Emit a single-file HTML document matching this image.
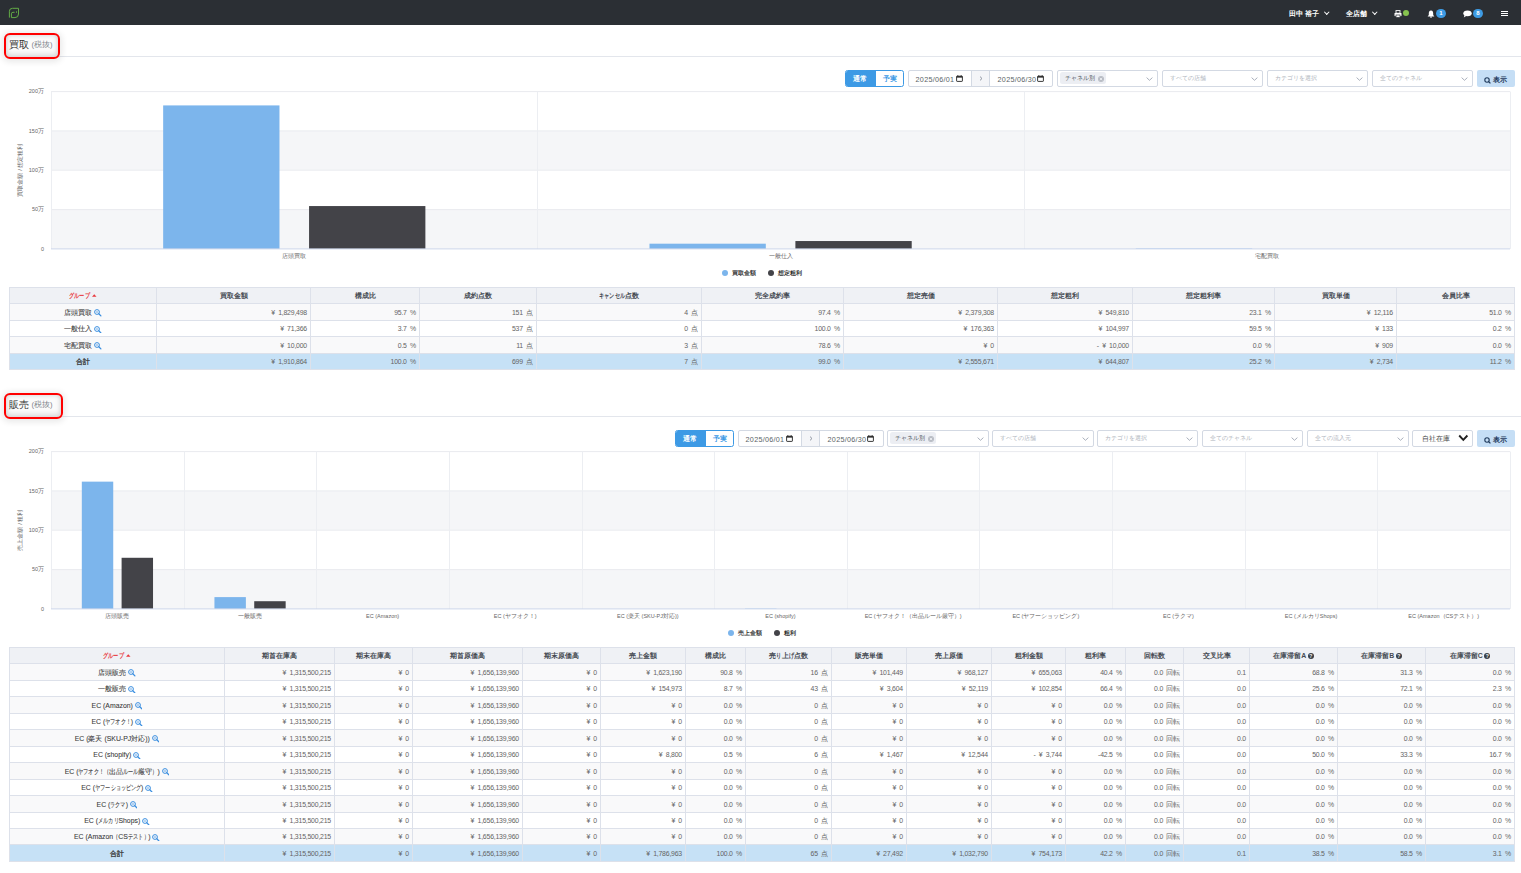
<!DOCTYPE html><html lang="ja"><head><meta charset="utf-8"><title>dashboard</title><style>
*{box-sizing:border-box;margin:0;padding:0}
html,body{width:1521px;height:873px;overflow:hidden;background:#fff}
body{position:relative;font-family:"Liberation Sans",sans-serif;color:#444}
.ab{position:absolute}
.hdr{left:0;top:0;width:1521px;height:24.5px;background:#2b2f34}
.hw{color:#fff;font-weight:bold;font-size:7px;line-height:7px;white-space:nowrap}
.ttl{font-size:10px;line-height:10px;color:#333;white-space:nowrap}
.ttl small{font-size:7px;color:#8a8f96}
.rbox{border:2.4px solid #ff0000;border-radius:6px;box-shadow:0 1px 6px 2px rgba(0,0,0,.09), inset 0 -2px 5px 1px rgba(0,0,0,.12), inset 0 1px 4px rgba(0,0,0,.07)}
.hline{height:1px;background:#e3e6ec}
.ctl{border:1px solid #d3d9e3;border-radius:2px;background:#fff}
.dtxt{font-size:7.2px;line-height:7px;color:#5a5f66;white-space:nowrap;letter-spacing:0.27px}
.ctxt{font-size:6px;line-height:6px;white-space:nowrap}
.chev{width:4px;height:4px;border-right:0.8px solid #9aa3b0;border-bottom:0.8px solid #9aa3b0;transform:rotate(45deg)}
.ylab{font-size:5.5px;line-height:6px;color:#666;text-align:right;width:40px;white-space:nowrap}
.clab{font-size:5.5px;line-height:6px;color:#666;text-align:center;white-space:nowrap}
.leg{font-size:5.8px;line-height:6px;color:#333;font-weight:bold;white-space:nowrap}
.tl{background:#dde1ea}
.cell{display:flex;align-items:center;white-space:nowrap;overflow:hidden;font-size:6.9px;line-height:7px}
.th{justify-content:center;font-weight:bold;color:#454a52;font-size:6.9px}
.tg{justify-content:center;color:#3a3a3a;-webkit-text-stroke:0.08px #3a3a3a}
.tt{-webkit-text-stroke:0.3px #3a3a3a}
.td{justify-content:flex-end;padding-right:3px;color:#646464;word-spacing:1.6px;letter-spacing:-0.2px}
.kw{display:inline-block;position:relative;height:1em;vertical-align:top}
.ki{position:absolute;left:0;top:0;transform-origin:0 50%;white-space:nowrap}
.sort{color:#e8383d}
.mag{display:inline-block;width:7.5px;height:7.5px;position:relative;top:0.9px;margin-left:2px;flex:none}
.q{display:inline-block;width:6px;height:6px;border-radius:50%;background:#3a3f47;color:#fff;font-size:5px;line-height:6px;text-align:center;margin-left:1.5px;font-weight:bold}
</style></head><body>
<div class="ab hdr"></div>
<svg class="ab" style="left:5px;top:4px" width="20" height="18" viewBox="0 0 20 18"><path d="M4.4 13.6 V7.2 Q4.4 4.3 7.5 4.3 H13.5 V10 Q13.5 13.6 10 13.6 H6.4 V9.8 Q6.4 8.3 8 8.3 H9.6" fill="none" stroke="#63aa46" stroke-width="1.0"/><ellipse cx="11.5" cy="8.1" rx="0.55" ry="0.8" fill="#65ad47"/></svg>
<div class="ab hw" style="left:1289px;top:9.5px">田中 裕子</div>
<div class="ab chev" style="left:1324.5px;top:10.2px;border-color:#fff;width:3.5px;height:3.5px"></div>
<div class="ab hw" style="left:1346px;top:9.5px">全店舗</div>
<div class="ab chev" style="left:1372.5px;top:10.2px;border-color:#fff;width:3.5px;height:3.5px"></div>
<svg class="ab" style="left:1393.5px;top:9.5px" width="8" height="8" viewBox="0 0 8 8"><rect x="2" y="0.6" width="4" height="2.6" fill="none" stroke="#fff" stroke-width="0.9"/><rect x="0.5" y="3" width="7" height="3.2" rx="0.6" fill="#fff"/><rect x="2" y="5" width="4" height="2.5" fill="#fff" stroke="#2b2f34" stroke-width="0.7"/></svg>
<div class="ab" style="left:1402.8px;top:9.9px;width:6.5px;height:6.5px;border-radius:50%;background:#86c34f"></div>
<svg class="ab" style="left:1427px;top:9.6px" width="8" height="8" viewBox="0 0 8 8"><path d="M4 0.4 C2.2 0.6 1.8 2 1.8 3.4 V5 L0.6 6.4 H7.4 L6.2 5 V3.4 C6.2 2 5.8 0.6 4 0.4Z" fill="#fff"/><circle cx="4" cy="7.1" r="0.8" fill="#fff"/></svg>
<div class="ab" style="left:1436px;top:8.8px;width:10px;height:9.4px;border-radius:50%;background:#3d9be4;color:#fff;font-size:6px;line-height:9.4px;text-align:center;font-weight:bold">1</div>
<svg class="ab" style="left:1463px;top:10px" width="9" height="8" viewBox="0 0 9 8"><ellipse cx="4.5" cy="3.3" rx="4.2" ry="2.9" fill="#fff"/><path d="M1.6 5 L0.8 7.4 L3.6 5.8Z" fill="#fff"/></svg>
<div class="ab" style="left:1473px;top:8.6px;width:10px;height:9.6px;border-radius:50%;background:#3d9be4;color:#fff;font-size:6px;line-height:9.6px;text-align:center;font-weight:bold">8</div>
<div class="ab" style="left:1500.8px;top:10.6px;width:7.2px;height:1.1px;background:#fff"></div>
<div class="ab" style="left:1500.8px;top:12.9px;width:7.2px;height:1.1px;background:#fff"></div>
<div class="ab" style="left:1500.8px;top:15.2px;width:7.2px;height:1.1px;background:#fff"></div>
<div class="ab hline" style="left:58px;top:56px;width:1463px"></div>
<div class="ab rbox" style="left:4.2px;top:33.1px;width:55.6px;height:25.6px;background:#fbfbfb"></div>
<div class="ab ttl" style="left:9.2px;top:39.6px">買取<span style="font-size:7.6px;color:#80858c;margin-left:2.3px;position:relative;top:-0.6px">(税抜)</span></div>
<div class="ab" style="left:845px;top:70px;width:59px;height:17px;border:1px solid #3d9ae5;border-radius:2.5px;background:#fff;overflow:hidden"><div style="position:absolute;left:0;top:0;width:30px;height:100%;background:#3d9ae5"></div></div>
<div class="ab" style="left:852.6px;top:75.2px;font-size:6.8px;line-height:7px;color:#fff;font-weight:bold">通常</div>
<div class="ab" style="left:882.6px;top:75.0px;font-size:6.8px;line-height:7px;color:#3d9ae5;font-weight:bold">予実</div>
<div class="ab ctl" style="left:908px;top:70px;width:145px;height:17px"></div>
<div class="ab" style="left:971px;top:71px;width:19px;height:15px;background:#f4f5f8;border-left:1px solid #d3d9e3;border-right:1px solid #d3d9e3"></div>
<svg class="ab" style="left:979.0px;top:76.2px" width="4" height="5" viewBox="0 0 4 5"><path d="M1 0.6 L3 2.5 L1 4.4" fill="none" stroke="#7a8290" stroke-width="0.8"/></svg>
<div class="ab dtxt" style="left:915.6px;top:76.0px">2025/06/01</div>
<svg class="ab" style="left:956.0px;top:74.8px" width="7" height="7" viewBox="0 0 7 7"><rect x="0.6" y="1.2" width="5.8" height="5.2" rx="0.5" fill="none" stroke="#222" stroke-width="0.9"/><rect x="0.6" y="1.2" width="5.8" height="1.4" fill="#222"/><path d="M1.8 0.2 V1.5 M5.2 0.2 V1.5" stroke="#222" stroke-width="0.8"/></svg>
<div class="ab dtxt" style="left:997.6px;top:76.0px">2025/06/30</div>
<svg class="ab" style="left:1036.8px;top:74.8px" width="7" height="7" viewBox="0 0 7 7"><rect x="0.6" y="1.2" width="5.8" height="5.2" rx="0.5" fill="none" stroke="#222" stroke-width="0.9"/><rect x="0.6" y="1.2" width="5.8" height="1.4" fill="#222"/><path d="M1.8 0.2 V1.5 M5.2 0.2 V1.5" stroke="#222" stroke-width="0.8"/></svg>
<div class="ab ctl" style="left:1057px;top:70px;width:101px;height:17px"></div>
<div class="ab" style="left:1060.0px;top:72.0px;width:46px;height:12px;background:#eceef3;border-radius:2.5px"></div>
<div class="ab ctxt" style="left:1064.9px;top:75.2px;color:#505560;font-size:5.9px">チャネル別</div>
<svg class="ab" style="left:1097.9px;top:75.9px" width="6" height="6" viewBox="0 0 6 6"><circle cx="3" cy="3" r="3" fill="#b8bcc4"/><path d="M1.8 1.8 L4.2 4.2 M4.2 1.8 L1.8 4.2" stroke="#eceef2" stroke-width="0.9"/></svg>
<svg class="ab" style="left:1145.7px;top:76.5px" width="7" height="4" viewBox="0 0 7 4"><path d="M0.6 0.6 L3.5 3.3 L6.4 0.6" fill="none" stroke="#8d96a5" stroke-width="0.75"/></svg>
<div class="ab ctl" style="left:1162px;top:70px;width:101px;height:17px"></div>
<div class="ab ctxt" style="left:1170.0px;top:75.4px;color:#adb2ba">すべての店舗</div>
<svg class="ab" style="left:1250.7px;top:76.5px" width="7" height="4" viewBox="0 0 7 4"><path d="M0.6 0.6 L3.5 3.3 L6.4 0.6" fill="none" stroke="#8d96a5" stroke-width="0.75"/></svg>
<div class="ab ctl" style="left:1267px;top:70px;width:101px;height:17px"></div>
<div class="ab ctxt" style="left:1275.0px;top:75.4px;color:#adb2ba">カテゴリを選択</div>
<svg class="ab" style="left:1355.7px;top:76.5px" width="7" height="4" viewBox="0 0 7 4"><path d="M0.6 0.6 L3.5 3.3 L6.4 0.6" fill="none" stroke="#8d96a5" stroke-width="0.75"/></svg>
<div class="ab ctl" style="left:1372px;top:70px;width:101px;height:17px"></div>
<div class="ab ctxt" style="left:1380.0px;top:75.4px;color:#adb2ba">全てのチャネル</div>
<svg class="ab" style="left:1460.7px;top:76.5px" width="7" height="4" viewBox="0 0 7 4"><path d="M0.6 0.6 L3.5 3.3 L6.4 0.6" fill="none" stroke="#8d96a5" stroke-width="0.75"/></svg>
<div class="ab" style="left:1477px;top:70px;width:38px;height:17px;background:#c5def5;border-radius:2px"></div>
<svg class="ab" style="left:1484.2px;top:76.5px" width="7" height="7" viewBox="0 0 7 7"><circle cx="3" cy="3" r="2.2" fill="none" stroke="#1f3a5c" stroke-width="1.1"/><path d="M4.6 4.6 L6.4 6.4" stroke="#1f3a5c" stroke-width="1.3"/></svg>
<div class="ab" style="left:1493.4px;top:75.9px;font-size:6.6px;line-height:7px;color:#1f3a5c;font-weight:bold">表示</div>
<svg class="ab" style="left:0;top:81px" width="1521" height="200" viewBox="0 81 1521 200"><rect x="51.0" y="130.93" width="1459.0" height="39.33" fill="#f5f6f8"/><rect x="51.0" y="209.57" width="1459.0" height="39.33" fill="#f5f6f8"/><line x1="51.0" x2="1510.0" y1="91.6" y2="91.6" stroke="#e9ebef" stroke-width="1"/><line x1="51.0" x2="1510.0" y1="130.9" y2="130.9" stroke="#e9ebef" stroke-width="1"/><line x1="51.0" x2="1510.0" y1="170.2" y2="170.2" stroke="#e9ebef" stroke-width="1"/><line x1="51.0" x2="1510.0" y1="209.6" y2="209.6" stroke="#e9ebef" stroke-width="1"/><line x1="51.5" x2="51.5" y1="91.6" y2="248.9" stroke="#eceef2" stroke-width="1"/><line x1="537.5" x2="537.5" y1="91.6" y2="248.9" stroke="#eceef2" stroke-width="1"/><line x1="1024.5" x2="1024.5" y1="91.6" y2="248.9" stroke="#eceef2" stroke-width="1"/><line x1="1510.5" x2="1510.5" y1="91.6" y2="248.9" stroke="#eceef2" stroke-width="1"/><rect x="163.16" y="105.41" width="116.32" height="143.49" fill="#7cb5ec"/><rect x="309.06" y="206.06" width="116.32" height="42.84" fill="#434348"/><rect x="649.49" y="243.69" width="116.32" height="5.21" fill="#7cb5ec"/><rect x="795.39" y="241.04" width="116.32" height="7.86" fill="#434348"/><rect x="1135.82" y="248.51" width="116.32" height="0.39" fill="#7cb5ec"/><line x1="51.0" x2="1510.0" y1="248.9" y2="248.9" stroke="#ccd6eb" stroke-width="1"/></svg>
<div class="ab ylab" style="left:4px;top:88.4px">200万</div>
<div class="ab ylab" style="left:4px;top:127.7px">150万</div>
<div class="ab ylab" style="left:4px;top:167.1px">100万</div>
<div class="ab ylab" style="left:4px;top:206.4px">50万</div>
<div class="ab ylab" style="left:4px;top:245.7px">0</div>
<div class="ab" style="left:20px;top:170.2px;width:0;height:0"><div style="position:absolute;left:-40px;top:-3px;width:80px;text-align:center;font-size:6px;line-height:6px;color:#666;transform:rotate(-90deg);white-space:nowrap">買取金額 / 想定粗利</div></div>
<div class="ab clab" style="left:224.2px;top:253.1px;width:140.0px">店頭買取</div>
<div class="ab clab" style="left:710.5px;top:253.1px;width:140.0px">一般仕入</div>
<div class="ab clab" style="left:1196.8px;top:253.1px;width:140.0px">宅配買取</div>
<div class="ab" style="left:722.1px;top:270.0px;width:6px;height:6px;border-radius:50%;background:#7cb5ec"></div>
<div class="ab leg" style="left:731.6px;top:269.9px">買取金額</div>
<div class="ab" style="left:768.2px;top:270.0px;width:6px;height:6px;border-radius:50%;background:#434348"></div>
<div class="ab leg" style="left:778.1px;top:269.9px">想定粗利</div>
<div class="ab" style="left:9px;top:287px;width:1506px;height:17px;background:#eff1f5"></div><div class="ab" style="left:9px;top:303px;width:1506px;height:18px;background:#f9f9fa"></div><div class="ab" style="left:9px;top:320px;width:1506px;height:17px;background:#ffffff"></div><div class="ab" style="left:9px;top:336px;width:1506px;height:18px;background:#f9f9fa"></div><div class="ab" style="left:9px;top:353px;width:1506px;height:17px;background:#c6e1f6"></div><div class="ab tl" style="left:9px;top:287px;width:1506px;height:1px"></div><div class="ab tl" style="left:9px;top:303px;width:1506px;height:1px"></div><div class="ab tl" style="left:9px;top:320px;width:1506px;height:1px"></div><div class="ab tl" style="left:9px;top:336px;width:1506px;height:1px"></div><div class="ab tl" style="left:9px;top:353px;width:1506px;height:1px"></div><div class="ab tl" style="left:9px;top:369px;width:1506px;height:1px"></div><div class="ab tl" style="left:9px;top:287px;width:1px;height:83px"></div><div class="ab tl" style="left:156px;top:287px;width:1px;height:83px"></div><div class="ab tl" style="left:310px;top:287px;width:1px;height:83px"></div><div class="ab tl" style="left:419px;top:287px;width:1px;height:83px"></div><div class="ab tl" style="left:536px;top:287px;width:1px;height:83px"></div><div class="ab tl" style="left:701px;top:287px;width:1px;height:83px"></div><div class="ab tl" style="left:843px;top:287px;width:1px;height:83px"></div><div class="ab tl" style="left:997px;top:287px;width:1px;height:83px"></div><div class="ab tl" style="left:1132px;top:287px;width:1px;height:83px"></div><div class="ab tl" style="left:1274px;top:287px;width:1px;height:83px"></div><div class="ab tl" style="left:1396px;top:287px;width:1px;height:83px"></div><div class="ab tl" style="left:1514px;top:287px;width:1px;height:83px"></div><div class="ab cell th" style="left:10px;top:288px;width:146px;height:15px"><span class="sort"><span class="kw" style="width:2.960em"><span class="ki" style="transform:scaleX(0.74)">グループ</span></span><svg style="display:inline-block;margin-left:3px;vertical-align:1.2px" width="4.5" height="3" viewBox="0 0 4.5 3"><path d="M0 2.8 L2.25 0.2 L4.5 2.8Z" fill="#e8383d"/></svg></span></div><div class="ab cell th" style="left:157px;top:288px;width:153px;height:15px">買取金額</div><div class="ab cell th" style="left:311px;top:288px;width:108px;height:15px">構成比</div><div class="ab cell th" style="left:420px;top:288px;width:116px;height:15px">成約点数</div><div class="ab cell th" style="left:537px;top:288px;width:164px;height:15px"><span class="kw" style="width:3.700em"><span class="ki" style="transform:scaleX(0.74)">キャンセル</span></span>点数</div><div class="ab cell th" style="left:702px;top:288px;width:141px;height:15px">完全成約率</div><div class="ab cell th" style="left:844px;top:288px;width:153px;height:15px">想定売価</div><div class="ab cell th" style="left:998px;top:288px;width:134px;height:15px">想定粗利</div><div class="ab cell th" style="left:1133px;top:288px;width:141px;height:15px">想定粗利率</div><div class="ab cell th" style="left:1275px;top:288px;width:121px;height:15px">買取単価</div><div class="ab cell th" style="left:1397px;top:288px;width:117px;height:15px">会員比率</div><div class="ab cell tg" style="left:10px;top:304px;width:146px;height:16px">店頭買取<svg class="mag" viewBox="0 0 7.5 7.5"><circle cx="3" cy="3" r="2.4" fill="none" stroke="#3b8fe0" stroke-width="1.0"/><path d="M4.8 4.8 L6.9 6.9" stroke="#3b8fe0" stroke-width="1.3" stroke-linecap="round"/><path d="M1.9 3 H4.1" stroke="#3b8fe0" stroke-width="0.75"/></svg></div><div class="ab cell td" style="left:157px;top:304px;width:153px;height:16px">¥ 1,829,498</div><div class="ab cell td" style="left:311px;top:304px;width:108px;height:16px">95.7 %</div><div class="ab cell td" style="left:420px;top:304px;width:116px;height:16px">151 点</div><div class="ab cell td" style="left:537px;top:304px;width:164px;height:16px">4 点</div><div class="ab cell td" style="left:702px;top:304px;width:141px;height:16px">97.4 %</div><div class="ab cell td" style="left:844px;top:304px;width:153px;height:16px">¥ 2,379,308</div><div class="ab cell td" style="left:998px;top:304px;width:134px;height:16px">¥ 549,810</div><div class="ab cell td" style="left:1133px;top:304px;width:141px;height:16px">23.1 %</div><div class="ab cell td" style="left:1275px;top:304px;width:121px;height:16px">¥ 12,116</div><div class="ab cell td" style="left:1397px;top:304px;width:117px;height:16px">51.0 %</div><div class="ab cell tg" style="left:10px;top:321px;width:146px;height:15px">一般仕入<svg class="mag" viewBox="0 0 7.5 7.5"><circle cx="3" cy="3" r="2.4" fill="none" stroke="#3b8fe0" stroke-width="1.0"/><path d="M4.8 4.8 L6.9 6.9" stroke="#3b8fe0" stroke-width="1.3" stroke-linecap="round"/><path d="M1.9 3 H4.1" stroke="#3b8fe0" stroke-width="0.75"/></svg></div><div class="ab cell td" style="left:157px;top:321px;width:153px;height:15px">¥ 71,366</div><div class="ab cell td" style="left:311px;top:321px;width:108px;height:15px">3.7 %</div><div class="ab cell td" style="left:420px;top:321px;width:116px;height:15px">537 点</div><div class="ab cell td" style="left:537px;top:321px;width:164px;height:15px">0 点</div><div class="ab cell td" style="left:702px;top:321px;width:141px;height:15px">100.0 %</div><div class="ab cell td" style="left:844px;top:321px;width:153px;height:15px">¥ 176,363</div><div class="ab cell td" style="left:998px;top:321px;width:134px;height:15px">¥ 104,997</div><div class="ab cell td" style="left:1133px;top:321px;width:141px;height:15px">59.5 %</div><div class="ab cell td" style="left:1275px;top:321px;width:121px;height:15px">¥ 133</div><div class="ab cell td" style="left:1397px;top:321px;width:117px;height:15px">0.2 %</div><div class="ab cell tg" style="left:10px;top:337px;width:146px;height:16px">宅配買取<svg class="mag" viewBox="0 0 7.5 7.5"><circle cx="3" cy="3" r="2.4" fill="none" stroke="#3b8fe0" stroke-width="1.0"/><path d="M4.8 4.8 L6.9 6.9" stroke="#3b8fe0" stroke-width="1.3" stroke-linecap="round"/><path d="M1.9 3 H4.1" stroke="#3b8fe0" stroke-width="0.75"/></svg></div><div class="ab cell td" style="left:157px;top:337px;width:153px;height:16px">¥ 10,000</div><div class="ab cell td" style="left:311px;top:337px;width:108px;height:16px">0.5 %</div><div class="ab cell td" style="left:420px;top:337px;width:116px;height:16px">11 点</div><div class="ab cell td" style="left:537px;top:337px;width:164px;height:16px">3 点</div><div class="ab cell td" style="left:702px;top:337px;width:141px;height:16px">78.6 %</div><div class="ab cell td" style="left:844px;top:337px;width:153px;height:16px">¥ 0</div><div class="ab cell td" style="left:998px;top:337px;width:134px;height:16px">- ¥ 10,000</div><div class="ab cell td" style="left:1133px;top:337px;width:141px;height:16px">0.0 %</div><div class="ab cell td" style="left:1275px;top:337px;width:121px;height:16px">¥ 909</div><div class="ab cell td" style="left:1397px;top:337px;width:117px;height:16px">0.0 %</div><div class="ab cell tg tt" style="left:10px;top:354px;width:146px;height:15px">合計</div><div class="ab cell td" style="left:157px;top:354px;width:153px;height:15px">¥ 1,910,864</div><div class="ab cell td" style="left:311px;top:354px;width:108px;height:15px">100.0 %</div><div class="ab cell td" style="left:420px;top:354px;width:116px;height:15px">699 点</div><div class="ab cell td" style="left:537px;top:354px;width:164px;height:15px">7 点</div><div class="ab cell td" style="left:702px;top:354px;width:141px;height:15px">99.0 %</div><div class="ab cell td" style="left:844px;top:354px;width:153px;height:15px">¥ 2,555,671</div><div class="ab cell td" style="left:998px;top:354px;width:134px;height:15px">¥ 644,807</div><div class="ab cell td" style="left:1133px;top:354px;width:141px;height:15px">25.2 %</div><div class="ab cell td" style="left:1275px;top:354px;width:121px;height:15px">¥ 2,734</div><div class="ab cell td" style="left:1397px;top:354px;width:117px;height:15px">11.2 %</div>
<div class="ab hline" style="left:58px;top:416px;width:1463px"></div>
<div class="ab rbox" style="left:4.2px;top:393.1px;width:58.5px;height:25.6px;background:#fbfbfb"></div>
<div class="ab ttl" style="left:9.2px;top:399.6px">販売<span style="font-size:7.6px;color:#80858c;margin-left:2.3px;position:relative;top:-0.6px">(税抜)</span></div>
<div class="ab" style="left:675px;top:430px;width:59px;height:17px;border:1px solid #3d9ae5;border-radius:2.5px;background:#fff;overflow:hidden"><div style="position:absolute;left:0;top:0;width:30px;height:100%;background:#3d9ae5"></div></div>
<div class="ab" style="left:682.6px;top:435.2px;font-size:6.8px;line-height:7px;color:#fff;font-weight:bold">通常</div>
<div class="ab" style="left:712.6px;top:435.0px;font-size:6.8px;line-height:7px;color:#3d9ae5;font-weight:bold">予実</div>
<div class="ab ctl" style="left:738px;top:430px;width:146px;height:17px"></div>
<div class="ab" style="left:801px;top:431px;width:19px;height:15px;background:#f4f5f8;border-left:1px solid #d3d9e3;border-right:1px solid #d3d9e3"></div>
<svg class="ab" style="left:809.0px;top:436.2px" width="4" height="5" viewBox="0 0 4 5"><path d="M1 0.6 L3 2.5 L1 4.4" fill="none" stroke="#7a8290" stroke-width="0.8"/></svg>
<div class="ab dtxt" style="left:745.6px;top:436.0px">2025/06/01</div>
<svg class="ab" style="left:786.0px;top:434.8px" width="7" height="7" viewBox="0 0 7 7"><rect x="0.6" y="1.2" width="5.8" height="5.2" rx="0.5" fill="none" stroke="#222" stroke-width="0.9"/><rect x="0.6" y="1.2" width="5.8" height="1.4" fill="#222"/><path d="M1.8 0.2 V1.5 M5.2 0.2 V1.5" stroke="#222" stroke-width="0.8"/></svg>
<div class="ab dtxt" style="left:827.6px;top:436.0px">2025/06/30</div>
<svg class="ab" style="left:866.8px;top:434.8px" width="7" height="7" viewBox="0 0 7 7"><rect x="0.6" y="1.2" width="5.8" height="5.2" rx="0.5" fill="none" stroke="#222" stroke-width="0.9"/><rect x="0.6" y="1.2" width="5.8" height="1.4" fill="#222"/><path d="M1.8 0.2 V1.5 M5.2 0.2 V1.5" stroke="#222" stroke-width="0.8"/></svg>
<div class="ab ctl" style="left:887px;top:430px;width:102px;height:17px"></div>
<div class="ab" style="left:890.0px;top:432.0px;width:46px;height:12px;background:#eceef3;border-radius:2.5px"></div>
<div class="ab ctxt" style="left:894.9px;top:435.2px;color:#505560;font-size:5.9px">チャネル別</div>
<svg class="ab" style="left:927.9px;top:435.9px" width="6" height="6" viewBox="0 0 6 6"><circle cx="3" cy="3" r="3" fill="#b8bcc4"/><path d="M1.8 1.8 L4.2 4.2 M4.2 1.8 L1.8 4.2" stroke="#eceef2" stroke-width="0.9"/></svg>
<svg class="ab" style="left:976.7px;top:436.5px" width="7" height="4" viewBox="0 0 7 4"><path d="M0.6 0.6 L3.5 3.3 L6.4 0.6" fill="none" stroke="#8d96a5" stroke-width="0.75"/></svg>
<div class="ab ctl" style="left:992px;top:430px;width:102px;height:17px"></div>
<div class="ab ctxt" style="left:1000.0px;top:435.4px;color:#adb2ba">すべての店舗</div>
<svg class="ab" style="left:1081.7px;top:436.5px" width="7" height="4" viewBox="0 0 7 4"><path d="M0.6 0.6 L3.5 3.3 L6.4 0.6" fill="none" stroke="#8d96a5" stroke-width="0.75"/></svg>
<div class="ab ctl" style="left:1097px;top:430px;width:101px;height:17px"></div>
<div class="ab ctxt" style="left:1105.0px;top:435.4px;color:#adb2ba">カテゴリを選択</div>
<svg class="ab" style="left:1185.7px;top:436.5px" width="7" height="4" viewBox="0 0 7 4"><path d="M0.6 0.6 L3.5 3.3 L6.4 0.6" fill="none" stroke="#8d96a5" stroke-width="0.75"/></svg>
<div class="ab ctl" style="left:1202px;top:430px;width:101px;height:17px"></div>
<div class="ab ctxt" style="left:1210.0px;top:435.4px;color:#adb2ba">全てのチャネル</div>
<svg class="ab" style="left:1290.7px;top:436.5px" width="7" height="4" viewBox="0 0 7 4"><path d="M0.6 0.6 L3.5 3.3 L6.4 0.6" fill="none" stroke="#8d96a5" stroke-width="0.75"/></svg>
<div class="ab ctl" style="left:1307px;top:430px;width:102px;height:17px"></div>
<div class="ab ctxt" style="left:1315.0px;top:435.4px;color:#adb2ba">全ての流入元</div>
<svg class="ab" style="left:1396.7px;top:436.5px" width="7" height="4" viewBox="0 0 7 4"><path d="M0.6 0.6 L3.5 3.3 L6.4 0.6" fill="none" stroke="#8d96a5" stroke-width="0.75"/></svg>
<div class="ab ctl" style="left:1412px;top:430px;width:61px;height:17px"></div>
<div class="ab ctxt" style="left:1421.8px;top:435.3px;color:#444;font-size:7px;line-height:7px">自社在庫</div>
<svg class="ab" style="left:1458px;top:433.8px" width="11" height="8" viewBox="0 0 11 8"><path d="M1.2 1.5 L5.3 5.8 L9.4 1.5" fill="none" stroke="#222" stroke-width="1.9"/></svg>
<div class="ab" style="left:1477px;top:430px;width:38px;height:17px;background:#c5def5;border-radius:2px"></div>
<svg class="ab" style="left:1484.2px;top:436.5px" width="7" height="7" viewBox="0 0 7 7"><circle cx="3" cy="3" r="2.2" fill="none" stroke="#1f3a5c" stroke-width="1.1"/><path d="M4.6 4.6 L6.4 6.4" stroke="#1f3a5c" stroke-width="1.3"/></svg>
<div class="ab" style="left:1493.4px;top:435.9px;font-size:6.6px;line-height:7px;color:#1f3a5c;font-weight:bold">表示</div>
<svg class="ab" style="left:0;top:441px" width="1521" height="200" viewBox="0 441 1521 200"><rect x="51.0" y="490.93" width="1459.0" height="39.32" fill="#f5f6f8"/><rect x="51.0" y="569.58" width="1459.0" height="39.32" fill="#f5f6f8"/><line x1="51.0" x2="1510.0" y1="451.6" y2="451.6" stroke="#e9ebef" stroke-width="1"/><line x1="51.0" x2="1510.0" y1="490.9" y2="490.9" stroke="#e9ebef" stroke-width="1"/><line x1="51.0" x2="1510.0" y1="530.2" y2="530.2" stroke="#e9ebef" stroke-width="1"/><line x1="51.0" x2="1510.0" y1="569.6" y2="569.6" stroke="#e9ebef" stroke-width="1"/><line x1="51.5" x2="51.5" y1="451.6" y2="608.9" stroke="#eceef2" stroke-width="1"/><line x1="184.5" x2="184.5" y1="451.6" y2="608.9" stroke="#eceef2" stroke-width="1"/><line x1="316.5" x2="316.5" y1="451.6" y2="608.9" stroke="#eceef2" stroke-width="1"/><line x1="449.5" x2="449.5" y1="451.6" y2="608.9" stroke="#eceef2" stroke-width="1"/><line x1="582.5" x2="582.5" y1="451.6" y2="608.9" stroke="#eceef2" stroke-width="1"/><line x1="714.5" x2="714.5" y1="451.6" y2="608.9" stroke="#eceef2" stroke-width="1"/><line x1="847.5" x2="847.5" y1="451.6" y2="608.9" stroke="#eceef2" stroke-width="1"/><line x1="979.5" x2="979.5" y1="451.6" y2="608.9" stroke="#eceef2" stroke-width="1"/><line x1="1112.5" x2="1112.5" y1="451.6" y2="608.9" stroke="#eceef2" stroke-width="1"/><line x1="1245.5" x2="1245.5" y1="451.6" y2="608.9" stroke="#eceef2" stroke-width="1"/><line x1="1377.5" x2="1377.5" y1="451.6" y2="608.9" stroke="#eceef2" stroke-width="1"/><line x1="1510.5" x2="1510.5" y1="451.6" y2="608.9" stroke="#eceef2" stroke-width="1"/><rect x="81.81" y="481.64" width="31.43" height="127.26" fill="#7cb5ec"/><rect x="121.60" y="557.78" width="31.43" height="51.12" fill="#434348"/><rect x="214.44" y="597.11" width="31.43" height="11.79" fill="#7cb5ec"/><rect x="254.23" y="601.21" width="31.43" height="7.69" fill="#434348"/><rect x="744.99" y="608.61" width="31.43" height="0.30" fill="#7cb5ec"/><line x1="51.0" x2="1510.0" y1="608.9" y2="608.9" stroke="#ccd6eb" stroke-width="1"/></svg>
<div class="ab ylab" style="left:4px;top:448.4px">200万</div>
<div class="ab ylab" style="left:4px;top:487.7px">150万</div>
<div class="ab ylab" style="left:4px;top:527.0px">100万</div>
<div class="ab ylab" style="left:4px;top:566.4px">50万</div>
<div class="ab ylab" style="left:4px;top:605.7px">0</div>
<div class="ab" style="left:20px;top:530.2px;width:0;height:0"><div style="position:absolute;left:-40px;top:-3px;width:80px;text-align:center;font-size:6px;line-height:6px;color:#666;transform:rotate(-90deg);white-space:nowrap">売上金額 / 粗利</div></div>
<div class="ab clab" style="left:47.3px;top:613.1px;width:140.0px">店頭販売</div>
<div class="ab clab" style="left:180.0px;top:613.1px;width:140.0px">一般販売</div>
<div class="ab clab" style="left:312.6px;top:613.1px;width:140.0px">EC (Amazon)</div>
<div class="ab clab" style="left:445.2px;top:613.1px;width:140.0px">EC (ヤフオク！)</div>
<div class="ab clab" style="left:577.9px;top:613.1px;width:140.0px">EC (楽天 (SKU-PJ対応))</div>
<div class="ab clab" style="left:710.5px;top:613.1px;width:140.0px">EC (shopify)</div>
<div class="ab clab" style="left:843.1px;top:613.1px;width:140.0px">EC (ヤフオク！（出品ルール厳守）)</div>
<div class="ab clab" style="left:975.8px;top:613.1px;width:140.0px">EC (ヤフーショッピング)</div>
<div class="ab clab" style="left:1108.4px;top:613.1px;width:140.0px">EC (ラクマ)</div>
<div class="ab clab" style="left:1241.0px;top:613.1px;width:140.0px">EC (メルカリShops)</div>
<div class="ab clab" style="left:1373.7px;top:613.1px;width:140.0px">EC (Amazon（CSテスト）)</div>
<div class="ab" style="left:728.0px;top:630.0px;width:6px;height:6px;border-radius:50%;background:#7cb5ec"></div>
<div class="ab leg" style="left:737.5px;top:629.9px">売上金額</div>
<div class="ab" style="left:774.1px;top:630.0px;width:6px;height:6px;border-radius:50%;background:#434348"></div>
<div class="ab leg" style="left:784.0px;top:629.9px">粗利</div>
<div class="ab" style="left:9px;top:647px;width:1506px;height:17px;background:#eff1f5"></div><div class="ab" style="left:9px;top:663px;width:1506px;height:18px;background:#f9f9fa"></div><div class="ab" style="left:9px;top:680px;width:1506px;height:17px;background:#ffffff"></div><div class="ab" style="left:9px;top:696px;width:1506px;height:18px;background:#f9f9fa"></div><div class="ab" style="left:9px;top:713px;width:1506px;height:17px;background:#ffffff"></div><div class="ab" style="left:9px;top:729px;width:1506px;height:18px;background:#f9f9fa"></div><div class="ab" style="left:9px;top:746px;width:1506px;height:17px;background:#ffffff"></div><div class="ab" style="left:9px;top:762px;width:1506px;height:18px;background:#f9f9fa"></div><div class="ab" style="left:9px;top:779px;width:1506px;height:17px;background:#ffffff"></div><div class="ab" style="left:9px;top:795px;width:1506px;height:18px;background:#f9f9fa"></div><div class="ab" style="left:9px;top:812px;width:1506px;height:17px;background:#ffffff"></div><div class="ab" style="left:9px;top:828px;width:1506px;height:17px;background:#f9f9fa"></div><div class="ab" style="left:9px;top:844px;width:1506px;height:18px;background:#c6e1f6"></div><div class="ab tl" style="left:9px;top:647px;width:1506px;height:1px"></div><div class="ab tl" style="left:9px;top:663px;width:1506px;height:1px"></div><div class="ab tl" style="left:9px;top:680px;width:1506px;height:1px"></div><div class="ab tl" style="left:9px;top:696px;width:1506px;height:1px"></div><div class="ab tl" style="left:9px;top:713px;width:1506px;height:1px"></div><div class="ab tl" style="left:9px;top:729px;width:1506px;height:1px"></div><div class="ab tl" style="left:9px;top:746px;width:1506px;height:1px"></div><div class="ab tl" style="left:9px;top:762px;width:1506px;height:1px"></div><div class="ab tl" style="left:9px;top:779px;width:1506px;height:1px"></div><div class="ab tl" style="left:9px;top:795px;width:1506px;height:1px"></div><div class="ab tl" style="left:9px;top:812px;width:1506px;height:1px"></div><div class="ab tl" style="left:9px;top:828px;width:1506px;height:1px"></div><div class="ab tl" style="left:9px;top:844px;width:1506px;height:1px"></div><div class="ab tl" style="left:9px;top:861px;width:1506px;height:1px"></div><div class="ab tl" style="left:9px;top:647px;width:1px;height:215px"></div><div class="ab tl" style="left:224px;top:647px;width:1px;height:215px"></div><div class="ab tl" style="left:334px;top:647px;width:1px;height:215px"></div><div class="ab tl" style="left:412px;top:647px;width:1px;height:215px"></div><div class="ab tl" style="left:522px;top:647px;width:1px;height:215px"></div><div class="ab tl" style="left:600px;top:647px;width:1px;height:215px"></div><div class="ab tl" style="left:685px;top:647px;width:1px;height:215px"></div><div class="ab tl" style="left:745px;top:647px;width:1px;height:215px"></div><div class="ab tl" style="left:831px;top:647px;width:1px;height:215px"></div><div class="ab tl" style="left:906px;top:647px;width:1px;height:215px"></div><div class="ab tl" style="left:991px;top:647px;width:1px;height:215px"></div><div class="ab tl" style="left:1065px;top:647px;width:1px;height:215px"></div><div class="ab tl" style="left:1125px;top:647px;width:1px;height:215px"></div><div class="ab tl" style="left:1183px;top:647px;width:1px;height:215px"></div><div class="ab tl" style="left:1249px;top:647px;width:1px;height:215px"></div><div class="ab tl" style="left:1337px;top:647px;width:1px;height:215px"></div><div class="ab tl" style="left:1425px;top:647px;width:1px;height:215px"></div><div class="ab tl" style="left:1514px;top:647px;width:1px;height:215px"></div><div class="ab cell th" style="left:10px;top:648px;width:214px;height:15px"><span class="sort"><span class="kw" style="width:2.960em"><span class="ki" style="transform:scaleX(0.74)">グループ</span></span><svg style="display:inline-block;margin-left:3px;vertical-align:1.2px" width="4.5" height="3" viewBox="0 0 4.5 3"><path d="M0 2.8 L2.25 0.2 L4.5 2.8Z" fill="#e8383d"/></svg></span></div><div class="ab cell th" style="left:225px;top:648px;width:109px;height:15px">期首在庫高</div><div class="ab cell th" style="left:335px;top:648px;width:77px;height:15px">期末在庫高</div><div class="ab cell th" style="left:413px;top:648px;width:109px;height:15px">期首原価高</div><div class="ab cell th" style="left:523px;top:648px;width:77px;height:15px">期末原価高</div><div class="ab cell th" style="left:601px;top:648px;width:84px;height:15px">売上金額</div><div class="ab cell th" style="left:686px;top:648px;width:59px;height:15px">構成比</div><div class="ab cell th" style="left:746px;top:648px;width:85px;height:15px">売<span class="kw" style="width:0.740em"><span class="ki" style="transform:scaleX(0.74)">り</span></span>上<span class="kw" style="width:0.740em"><span class="ki" style="transform:scaleX(0.74)">げ</span></span>点数</div><div class="ab cell th" style="left:832px;top:648px;width:74px;height:15px">販売単価</div><div class="ab cell th" style="left:907px;top:648px;width:84px;height:15px">売上原価</div><div class="ab cell th" style="left:992px;top:648px;width:73px;height:15px">粗利金額</div><div class="ab cell th" style="left:1066px;top:648px;width:59px;height:15px">粗利率</div><div class="ab cell th" style="left:1126px;top:648px;width:57px;height:15px">回転数</div><div class="ab cell th" style="left:1184px;top:648px;width:65px;height:15px">交叉比率</div><div class="ab cell th" style="left:1250px;top:648px;width:87px;height:15px">在庫滞留A<span class="q">?</span></div><div class="ab cell th" style="left:1338px;top:648px;width:87px;height:15px">在庫滞留B<span class="q">?</span></div><div class="ab cell th" style="left:1426px;top:648px;width:88px;height:15px">在庫滞留C<span class="q">?</span></div><div class="ab cell tg" style="left:10px;top:664px;width:214px;height:16px">店頭販売<svg class="mag" viewBox="0 0 7.5 7.5"><circle cx="3" cy="3" r="2.4" fill="none" stroke="#3b8fe0" stroke-width="1.0"/><path d="M4.8 4.8 L6.9 6.9" stroke="#3b8fe0" stroke-width="1.3" stroke-linecap="round"/><path d="M1.9 3 H4.1" stroke="#3b8fe0" stroke-width="0.75"/></svg></div><div class="ab cell td" style="left:225px;top:664px;width:109px;height:16px">¥ 1,315,500,215</div><div class="ab cell td" style="left:335px;top:664px;width:77px;height:16px">¥ 0</div><div class="ab cell td" style="left:413px;top:664px;width:109px;height:16px">¥ 1,656,139,960</div><div class="ab cell td" style="left:523px;top:664px;width:77px;height:16px">¥ 0</div><div class="ab cell td" style="left:601px;top:664px;width:84px;height:16px">¥ 1,623,190</div><div class="ab cell td" style="left:686px;top:664px;width:59px;height:16px">90.8 %</div><div class="ab cell td" style="left:746px;top:664px;width:85px;height:16px">16 点</div><div class="ab cell td" style="left:832px;top:664px;width:74px;height:16px">¥ 101,449</div><div class="ab cell td" style="left:907px;top:664px;width:84px;height:16px">¥ 968,127</div><div class="ab cell td" style="left:992px;top:664px;width:73px;height:16px">¥ 655,063</div><div class="ab cell td" style="left:1066px;top:664px;width:59px;height:16px">40.4 %</div><div class="ab cell td" style="left:1126px;top:664px;width:57px;height:16px">0.0 回転</div><div class="ab cell td" style="left:1184px;top:664px;width:65px;height:16px">0.1</div><div class="ab cell td" style="left:1250px;top:664px;width:87px;height:16px">68.8 %</div><div class="ab cell td" style="left:1338px;top:664px;width:87px;height:16px">31.3 %</div><div class="ab cell td" style="left:1426px;top:664px;width:88px;height:16px">0.0 %</div><div class="ab cell tg" style="left:10px;top:681px;width:214px;height:15px">一般販売<svg class="mag" viewBox="0 0 7.5 7.5"><circle cx="3" cy="3" r="2.4" fill="none" stroke="#3b8fe0" stroke-width="1.0"/><path d="M4.8 4.8 L6.9 6.9" stroke="#3b8fe0" stroke-width="1.3" stroke-linecap="round"/><path d="M1.9 3 H4.1" stroke="#3b8fe0" stroke-width="0.75"/></svg></div><div class="ab cell td" style="left:225px;top:681px;width:109px;height:15px">¥ 1,315,500,215</div><div class="ab cell td" style="left:335px;top:681px;width:77px;height:15px">¥ 0</div><div class="ab cell td" style="left:413px;top:681px;width:109px;height:15px">¥ 1,656,139,960</div><div class="ab cell td" style="left:523px;top:681px;width:77px;height:15px">¥ 0</div><div class="ab cell td" style="left:601px;top:681px;width:84px;height:15px">¥ 154,973</div><div class="ab cell td" style="left:686px;top:681px;width:59px;height:15px">8.7 %</div><div class="ab cell td" style="left:746px;top:681px;width:85px;height:15px">43 点</div><div class="ab cell td" style="left:832px;top:681px;width:74px;height:15px">¥ 3,604</div><div class="ab cell td" style="left:907px;top:681px;width:84px;height:15px">¥ 52,119</div><div class="ab cell td" style="left:992px;top:681px;width:73px;height:15px">¥ 102,854</div><div class="ab cell td" style="left:1066px;top:681px;width:59px;height:15px">66.4 %</div><div class="ab cell td" style="left:1126px;top:681px;width:57px;height:15px">0.0 回転</div><div class="ab cell td" style="left:1184px;top:681px;width:65px;height:15px">0.0</div><div class="ab cell td" style="left:1250px;top:681px;width:87px;height:15px">25.6 %</div><div class="ab cell td" style="left:1338px;top:681px;width:87px;height:15px">72.1 %</div><div class="ab cell td" style="left:1426px;top:681px;width:88px;height:15px">2.3 %</div><div class="ab cell tg" style="left:10px;top:697px;width:214px;height:16px">EC (Amazon)<svg class="mag" viewBox="0 0 7.5 7.5"><circle cx="3" cy="3" r="2.4" fill="none" stroke="#3b8fe0" stroke-width="1.0"/><path d="M4.8 4.8 L6.9 6.9" stroke="#3b8fe0" stroke-width="1.3" stroke-linecap="round"/><path d="M1.9 3 H4.1" stroke="#3b8fe0" stroke-width="0.75"/></svg></div><div class="ab cell td" style="left:225px;top:697px;width:109px;height:16px">¥ 1,315,500,215</div><div class="ab cell td" style="left:335px;top:697px;width:77px;height:16px">¥ 0</div><div class="ab cell td" style="left:413px;top:697px;width:109px;height:16px">¥ 1,656,139,960</div><div class="ab cell td" style="left:523px;top:697px;width:77px;height:16px">¥ 0</div><div class="ab cell td" style="left:601px;top:697px;width:84px;height:16px">¥ 0</div><div class="ab cell td" style="left:686px;top:697px;width:59px;height:16px">0.0 %</div><div class="ab cell td" style="left:746px;top:697px;width:85px;height:16px">0 点</div><div class="ab cell td" style="left:832px;top:697px;width:74px;height:16px">¥ 0</div><div class="ab cell td" style="left:907px;top:697px;width:84px;height:16px">¥ 0</div><div class="ab cell td" style="left:992px;top:697px;width:73px;height:16px">¥ 0</div><div class="ab cell td" style="left:1066px;top:697px;width:59px;height:16px">0.0 %</div><div class="ab cell td" style="left:1126px;top:697px;width:57px;height:16px">0.0 回転</div><div class="ab cell td" style="left:1184px;top:697px;width:65px;height:16px">0.0</div><div class="ab cell td" style="left:1250px;top:697px;width:87px;height:16px">0.0 %</div><div class="ab cell td" style="left:1338px;top:697px;width:87px;height:16px">0.0 %</div><div class="ab cell td" style="left:1426px;top:697px;width:88px;height:16px">0.0 %</div><div class="ab cell tg" style="left:10px;top:714px;width:214px;height:15px">EC (<span class="kw" style="width:3.700em"><span class="ki" style="transform:scaleX(0.74)">ヤフオク！</span></span>)<svg class="mag" viewBox="0 0 7.5 7.5"><circle cx="3" cy="3" r="2.4" fill="none" stroke="#3b8fe0" stroke-width="1.0"/><path d="M4.8 4.8 L6.9 6.9" stroke="#3b8fe0" stroke-width="1.3" stroke-linecap="round"/><path d="M1.9 3 H4.1" stroke="#3b8fe0" stroke-width="0.75"/></svg></div><div class="ab cell td" style="left:225px;top:714px;width:109px;height:15px">¥ 1,315,500,215</div><div class="ab cell td" style="left:335px;top:714px;width:77px;height:15px">¥ 0</div><div class="ab cell td" style="left:413px;top:714px;width:109px;height:15px">¥ 1,656,139,960</div><div class="ab cell td" style="left:523px;top:714px;width:77px;height:15px">¥ 0</div><div class="ab cell td" style="left:601px;top:714px;width:84px;height:15px">¥ 0</div><div class="ab cell td" style="left:686px;top:714px;width:59px;height:15px">0.0 %</div><div class="ab cell td" style="left:746px;top:714px;width:85px;height:15px">0 点</div><div class="ab cell td" style="left:832px;top:714px;width:74px;height:15px">¥ 0</div><div class="ab cell td" style="left:907px;top:714px;width:84px;height:15px">¥ 0</div><div class="ab cell td" style="left:992px;top:714px;width:73px;height:15px">¥ 0</div><div class="ab cell td" style="left:1066px;top:714px;width:59px;height:15px">0.0 %</div><div class="ab cell td" style="left:1126px;top:714px;width:57px;height:15px">0.0 回転</div><div class="ab cell td" style="left:1184px;top:714px;width:65px;height:15px">0.0</div><div class="ab cell td" style="left:1250px;top:714px;width:87px;height:15px">0.0 %</div><div class="ab cell td" style="left:1338px;top:714px;width:87px;height:15px">0.0 %</div><div class="ab cell td" style="left:1426px;top:714px;width:88px;height:15px">0.0 %</div><div class="ab cell tg" style="left:10px;top:730px;width:214px;height:16px">EC (楽天 (SKU-PJ対応))<svg class="mag" viewBox="0 0 7.5 7.5"><circle cx="3" cy="3" r="2.4" fill="none" stroke="#3b8fe0" stroke-width="1.0"/><path d="M4.8 4.8 L6.9 6.9" stroke="#3b8fe0" stroke-width="1.3" stroke-linecap="round"/><path d="M1.9 3 H4.1" stroke="#3b8fe0" stroke-width="0.75"/></svg></div><div class="ab cell td" style="left:225px;top:730px;width:109px;height:16px">¥ 1,315,500,215</div><div class="ab cell td" style="left:335px;top:730px;width:77px;height:16px">¥ 0</div><div class="ab cell td" style="left:413px;top:730px;width:109px;height:16px">¥ 1,656,139,960</div><div class="ab cell td" style="left:523px;top:730px;width:77px;height:16px">¥ 0</div><div class="ab cell td" style="left:601px;top:730px;width:84px;height:16px">¥ 0</div><div class="ab cell td" style="left:686px;top:730px;width:59px;height:16px">0.0 %</div><div class="ab cell td" style="left:746px;top:730px;width:85px;height:16px">0 点</div><div class="ab cell td" style="left:832px;top:730px;width:74px;height:16px">¥ 0</div><div class="ab cell td" style="left:907px;top:730px;width:84px;height:16px">¥ 0</div><div class="ab cell td" style="left:992px;top:730px;width:73px;height:16px">¥ 0</div><div class="ab cell td" style="left:1066px;top:730px;width:59px;height:16px">0.0 %</div><div class="ab cell td" style="left:1126px;top:730px;width:57px;height:16px">0.0 回転</div><div class="ab cell td" style="left:1184px;top:730px;width:65px;height:16px">0.0</div><div class="ab cell td" style="left:1250px;top:730px;width:87px;height:16px">0.0 %</div><div class="ab cell td" style="left:1338px;top:730px;width:87px;height:16px">0.0 %</div><div class="ab cell td" style="left:1426px;top:730px;width:88px;height:16px">0.0 %</div><div class="ab cell tg" style="left:10px;top:747px;width:214px;height:15px">EC (shopify)<svg class="mag" viewBox="0 0 7.5 7.5"><circle cx="3" cy="3" r="2.4" fill="none" stroke="#3b8fe0" stroke-width="1.0"/><path d="M4.8 4.8 L6.9 6.9" stroke="#3b8fe0" stroke-width="1.3" stroke-linecap="round"/><path d="M1.9 3 H4.1" stroke="#3b8fe0" stroke-width="0.75"/></svg></div><div class="ab cell td" style="left:225px;top:747px;width:109px;height:15px">¥ 1,315,500,215</div><div class="ab cell td" style="left:335px;top:747px;width:77px;height:15px">¥ 0</div><div class="ab cell td" style="left:413px;top:747px;width:109px;height:15px">¥ 1,656,139,960</div><div class="ab cell td" style="left:523px;top:747px;width:77px;height:15px">¥ 0</div><div class="ab cell td" style="left:601px;top:747px;width:84px;height:15px">¥ 8,800</div><div class="ab cell td" style="left:686px;top:747px;width:59px;height:15px">0.5 %</div><div class="ab cell td" style="left:746px;top:747px;width:85px;height:15px">6 点</div><div class="ab cell td" style="left:832px;top:747px;width:74px;height:15px">¥ 1,467</div><div class="ab cell td" style="left:907px;top:747px;width:84px;height:15px">¥ 12,544</div><div class="ab cell td" style="left:992px;top:747px;width:73px;height:15px">- ¥ 3,744</div><div class="ab cell td" style="left:1066px;top:747px;width:59px;height:15px">-42.5 %</div><div class="ab cell td" style="left:1126px;top:747px;width:57px;height:15px">0.0 回転</div><div class="ab cell td" style="left:1184px;top:747px;width:65px;height:15px">0.0</div><div class="ab cell td" style="left:1250px;top:747px;width:87px;height:15px">50.0 %</div><div class="ab cell td" style="left:1338px;top:747px;width:87px;height:15px">33.3 %</div><div class="ab cell td" style="left:1426px;top:747px;width:88px;height:15px">16.7 %</div><div class="ab cell tg" style="left:10px;top:763px;width:214px;height:16px">EC (<span class="kw" style="width:4.440em"><span class="ki" style="transform:scaleX(0.74)">ヤフオク！（</span></span>出品<span class="kw" style="width:2.220em"><span class="ki" style="transform:scaleX(0.74)">ルール</span></span>厳守<span class="kw" style="width:0.740em"><span class="ki" style="transform:scaleX(0.74)">）</span></span>)<svg class="mag" viewBox="0 0 7.5 7.5"><circle cx="3" cy="3" r="2.4" fill="none" stroke="#3b8fe0" stroke-width="1.0"/><path d="M4.8 4.8 L6.9 6.9" stroke="#3b8fe0" stroke-width="1.3" stroke-linecap="round"/><path d="M1.9 3 H4.1" stroke="#3b8fe0" stroke-width="0.75"/></svg></div><div class="ab cell td" style="left:225px;top:763px;width:109px;height:16px">¥ 1,315,500,215</div><div class="ab cell td" style="left:335px;top:763px;width:77px;height:16px">¥ 0</div><div class="ab cell td" style="left:413px;top:763px;width:109px;height:16px">¥ 1,656,139,960</div><div class="ab cell td" style="left:523px;top:763px;width:77px;height:16px">¥ 0</div><div class="ab cell td" style="left:601px;top:763px;width:84px;height:16px">¥ 0</div><div class="ab cell td" style="left:686px;top:763px;width:59px;height:16px">0.0 %</div><div class="ab cell td" style="left:746px;top:763px;width:85px;height:16px">0 点</div><div class="ab cell td" style="left:832px;top:763px;width:74px;height:16px">¥ 0</div><div class="ab cell td" style="left:907px;top:763px;width:84px;height:16px">¥ 0</div><div class="ab cell td" style="left:992px;top:763px;width:73px;height:16px">¥ 0</div><div class="ab cell td" style="left:1066px;top:763px;width:59px;height:16px">0.0 %</div><div class="ab cell td" style="left:1126px;top:763px;width:57px;height:16px">0.0 回転</div><div class="ab cell td" style="left:1184px;top:763px;width:65px;height:16px">0.0</div><div class="ab cell td" style="left:1250px;top:763px;width:87px;height:16px">0.0 %</div><div class="ab cell td" style="left:1338px;top:763px;width:87px;height:16px">0.0 %</div><div class="ab cell td" style="left:1426px;top:763px;width:88px;height:16px">0.0 %</div><div class="ab cell tg" style="left:10px;top:780px;width:214px;height:15px">EC (<span class="kw" style="width:6.660em"><span class="ki" style="transform:scaleX(0.74)">ヤフーショッピング</span></span>)<svg class="mag" viewBox="0 0 7.5 7.5"><circle cx="3" cy="3" r="2.4" fill="none" stroke="#3b8fe0" stroke-width="1.0"/><path d="M4.8 4.8 L6.9 6.9" stroke="#3b8fe0" stroke-width="1.3" stroke-linecap="round"/><path d="M1.9 3 H4.1" stroke="#3b8fe0" stroke-width="0.75"/></svg></div><div class="ab cell td" style="left:225px;top:780px;width:109px;height:15px">¥ 1,315,500,215</div><div class="ab cell td" style="left:335px;top:780px;width:77px;height:15px">¥ 0</div><div class="ab cell td" style="left:413px;top:780px;width:109px;height:15px">¥ 1,656,139,960</div><div class="ab cell td" style="left:523px;top:780px;width:77px;height:15px">¥ 0</div><div class="ab cell td" style="left:601px;top:780px;width:84px;height:15px">¥ 0</div><div class="ab cell td" style="left:686px;top:780px;width:59px;height:15px">0.0 %</div><div class="ab cell td" style="left:746px;top:780px;width:85px;height:15px">0 点</div><div class="ab cell td" style="left:832px;top:780px;width:74px;height:15px">¥ 0</div><div class="ab cell td" style="left:907px;top:780px;width:84px;height:15px">¥ 0</div><div class="ab cell td" style="left:992px;top:780px;width:73px;height:15px">¥ 0</div><div class="ab cell td" style="left:1066px;top:780px;width:59px;height:15px">0.0 %</div><div class="ab cell td" style="left:1126px;top:780px;width:57px;height:15px">0.0 回転</div><div class="ab cell td" style="left:1184px;top:780px;width:65px;height:15px">0.0</div><div class="ab cell td" style="left:1250px;top:780px;width:87px;height:15px">0.0 %</div><div class="ab cell td" style="left:1338px;top:780px;width:87px;height:15px">0.0 %</div><div class="ab cell td" style="left:1426px;top:780px;width:88px;height:15px">0.0 %</div><div class="ab cell tg" style="left:10px;top:796px;width:214px;height:16px">EC (<span class="kw" style="width:2.220em"><span class="ki" style="transform:scaleX(0.74)">ラクマ</span></span>)<svg class="mag" viewBox="0 0 7.5 7.5"><circle cx="3" cy="3" r="2.4" fill="none" stroke="#3b8fe0" stroke-width="1.0"/><path d="M4.8 4.8 L6.9 6.9" stroke="#3b8fe0" stroke-width="1.3" stroke-linecap="round"/><path d="M1.9 3 H4.1" stroke="#3b8fe0" stroke-width="0.75"/></svg></div><div class="ab cell td" style="left:225px;top:796px;width:109px;height:16px">¥ 1,315,500,215</div><div class="ab cell td" style="left:335px;top:796px;width:77px;height:16px">¥ 0</div><div class="ab cell td" style="left:413px;top:796px;width:109px;height:16px">¥ 1,656,139,960</div><div class="ab cell td" style="left:523px;top:796px;width:77px;height:16px">¥ 0</div><div class="ab cell td" style="left:601px;top:796px;width:84px;height:16px">¥ 0</div><div class="ab cell td" style="left:686px;top:796px;width:59px;height:16px">0.0 %</div><div class="ab cell td" style="left:746px;top:796px;width:85px;height:16px">0 点</div><div class="ab cell td" style="left:832px;top:796px;width:74px;height:16px">¥ 0</div><div class="ab cell td" style="left:907px;top:796px;width:84px;height:16px">¥ 0</div><div class="ab cell td" style="left:992px;top:796px;width:73px;height:16px">¥ 0</div><div class="ab cell td" style="left:1066px;top:796px;width:59px;height:16px">0.0 %</div><div class="ab cell td" style="left:1126px;top:796px;width:57px;height:16px">0.0 回転</div><div class="ab cell td" style="left:1184px;top:796px;width:65px;height:16px">0.0</div><div class="ab cell td" style="left:1250px;top:796px;width:87px;height:16px">0.0 %</div><div class="ab cell td" style="left:1338px;top:796px;width:87px;height:16px">0.0 %</div><div class="ab cell td" style="left:1426px;top:796px;width:88px;height:16px">0.0 %</div><div class="ab cell tg" style="left:10px;top:813px;width:214px;height:15px">EC (<span class="kw" style="width:2.960em"><span class="ki" style="transform:scaleX(0.74)">メルカリ</span></span>Shops)<svg class="mag" viewBox="0 0 7.5 7.5"><circle cx="3" cy="3" r="2.4" fill="none" stroke="#3b8fe0" stroke-width="1.0"/><path d="M4.8 4.8 L6.9 6.9" stroke="#3b8fe0" stroke-width="1.3" stroke-linecap="round"/><path d="M1.9 3 H4.1" stroke="#3b8fe0" stroke-width="0.75"/></svg></div><div class="ab cell td" style="left:225px;top:813px;width:109px;height:15px">¥ 1,315,500,215</div><div class="ab cell td" style="left:335px;top:813px;width:77px;height:15px">¥ 0</div><div class="ab cell td" style="left:413px;top:813px;width:109px;height:15px">¥ 1,656,139,960</div><div class="ab cell td" style="left:523px;top:813px;width:77px;height:15px">¥ 0</div><div class="ab cell td" style="left:601px;top:813px;width:84px;height:15px">¥ 0</div><div class="ab cell td" style="left:686px;top:813px;width:59px;height:15px">0.0 %</div><div class="ab cell td" style="left:746px;top:813px;width:85px;height:15px">0 点</div><div class="ab cell td" style="left:832px;top:813px;width:74px;height:15px">¥ 0</div><div class="ab cell td" style="left:907px;top:813px;width:84px;height:15px">¥ 0</div><div class="ab cell td" style="left:992px;top:813px;width:73px;height:15px">¥ 0</div><div class="ab cell td" style="left:1066px;top:813px;width:59px;height:15px">0.0 %</div><div class="ab cell td" style="left:1126px;top:813px;width:57px;height:15px">0.0 回転</div><div class="ab cell td" style="left:1184px;top:813px;width:65px;height:15px">0.0</div><div class="ab cell td" style="left:1250px;top:813px;width:87px;height:15px">0.0 %</div><div class="ab cell td" style="left:1338px;top:813px;width:87px;height:15px">0.0 %</div><div class="ab cell td" style="left:1426px;top:813px;width:88px;height:15px">0.0 %</div><div class="ab cell tg" style="left:10px;top:829px;width:214px;height:15px">EC (Amazon<span class="kw" style="width:0.740em"><span class="ki" style="transform:scaleX(0.74)">（</span></span>CS<span class="kw" style="width:2.960em"><span class="ki" style="transform:scaleX(0.74)">テスト）</span></span>)<svg class="mag" viewBox="0 0 7.5 7.5"><circle cx="3" cy="3" r="2.4" fill="none" stroke="#3b8fe0" stroke-width="1.0"/><path d="M4.8 4.8 L6.9 6.9" stroke="#3b8fe0" stroke-width="1.3" stroke-linecap="round"/><path d="M1.9 3 H4.1" stroke="#3b8fe0" stroke-width="0.75"/></svg></div><div class="ab cell td" style="left:225px;top:829px;width:109px;height:15px">¥ 1,315,500,215</div><div class="ab cell td" style="left:335px;top:829px;width:77px;height:15px">¥ 0</div><div class="ab cell td" style="left:413px;top:829px;width:109px;height:15px">¥ 1,656,139,960</div><div class="ab cell td" style="left:523px;top:829px;width:77px;height:15px">¥ 0</div><div class="ab cell td" style="left:601px;top:829px;width:84px;height:15px">¥ 0</div><div class="ab cell td" style="left:686px;top:829px;width:59px;height:15px">0.0 %</div><div class="ab cell td" style="left:746px;top:829px;width:85px;height:15px">0 点</div><div class="ab cell td" style="left:832px;top:829px;width:74px;height:15px">¥ 0</div><div class="ab cell td" style="left:907px;top:829px;width:84px;height:15px">¥ 0</div><div class="ab cell td" style="left:992px;top:829px;width:73px;height:15px">¥ 0</div><div class="ab cell td" style="left:1066px;top:829px;width:59px;height:15px">0.0 %</div><div class="ab cell td" style="left:1126px;top:829px;width:57px;height:15px">0.0 回転</div><div class="ab cell td" style="left:1184px;top:829px;width:65px;height:15px">0.0</div><div class="ab cell td" style="left:1250px;top:829px;width:87px;height:15px">0.0 %</div><div class="ab cell td" style="left:1338px;top:829px;width:87px;height:15px">0.0 %</div><div class="ab cell td" style="left:1426px;top:829px;width:88px;height:15px">0.0 %</div><div class="ab cell tg tt" style="left:10px;top:845px;width:214px;height:16px">合計</div><div class="ab cell td" style="left:225px;top:845px;width:109px;height:16px">¥ 1,315,500,215</div><div class="ab cell td" style="left:335px;top:845px;width:77px;height:16px">¥ 0</div><div class="ab cell td" style="left:413px;top:845px;width:109px;height:16px">¥ 1,656,139,960</div><div class="ab cell td" style="left:523px;top:845px;width:77px;height:16px">¥ 0</div><div class="ab cell td" style="left:601px;top:845px;width:84px;height:16px">¥ 1,786,963</div><div class="ab cell td" style="left:686px;top:845px;width:59px;height:16px">100.0 %</div><div class="ab cell td" style="left:746px;top:845px;width:85px;height:16px">65 点</div><div class="ab cell td" style="left:832px;top:845px;width:74px;height:16px">¥ 27,492</div><div class="ab cell td" style="left:907px;top:845px;width:84px;height:16px">¥ 1,032,790</div><div class="ab cell td" style="left:992px;top:845px;width:73px;height:16px">¥ 754,173</div><div class="ab cell td" style="left:1066px;top:845px;width:59px;height:16px">42.2 %</div><div class="ab cell td" style="left:1126px;top:845px;width:57px;height:16px">0.0 回転</div><div class="ab cell td" style="left:1184px;top:845px;width:65px;height:16px">0.1</div><div class="ab cell td" style="left:1250px;top:845px;width:87px;height:16px">38.5 %</div><div class="ab cell td" style="left:1338px;top:845px;width:87px;height:16px">58.5 %</div><div class="ab cell td" style="left:1426px;top:845px;width:88px;height:16px">3.1 %</div>
</body></html>
